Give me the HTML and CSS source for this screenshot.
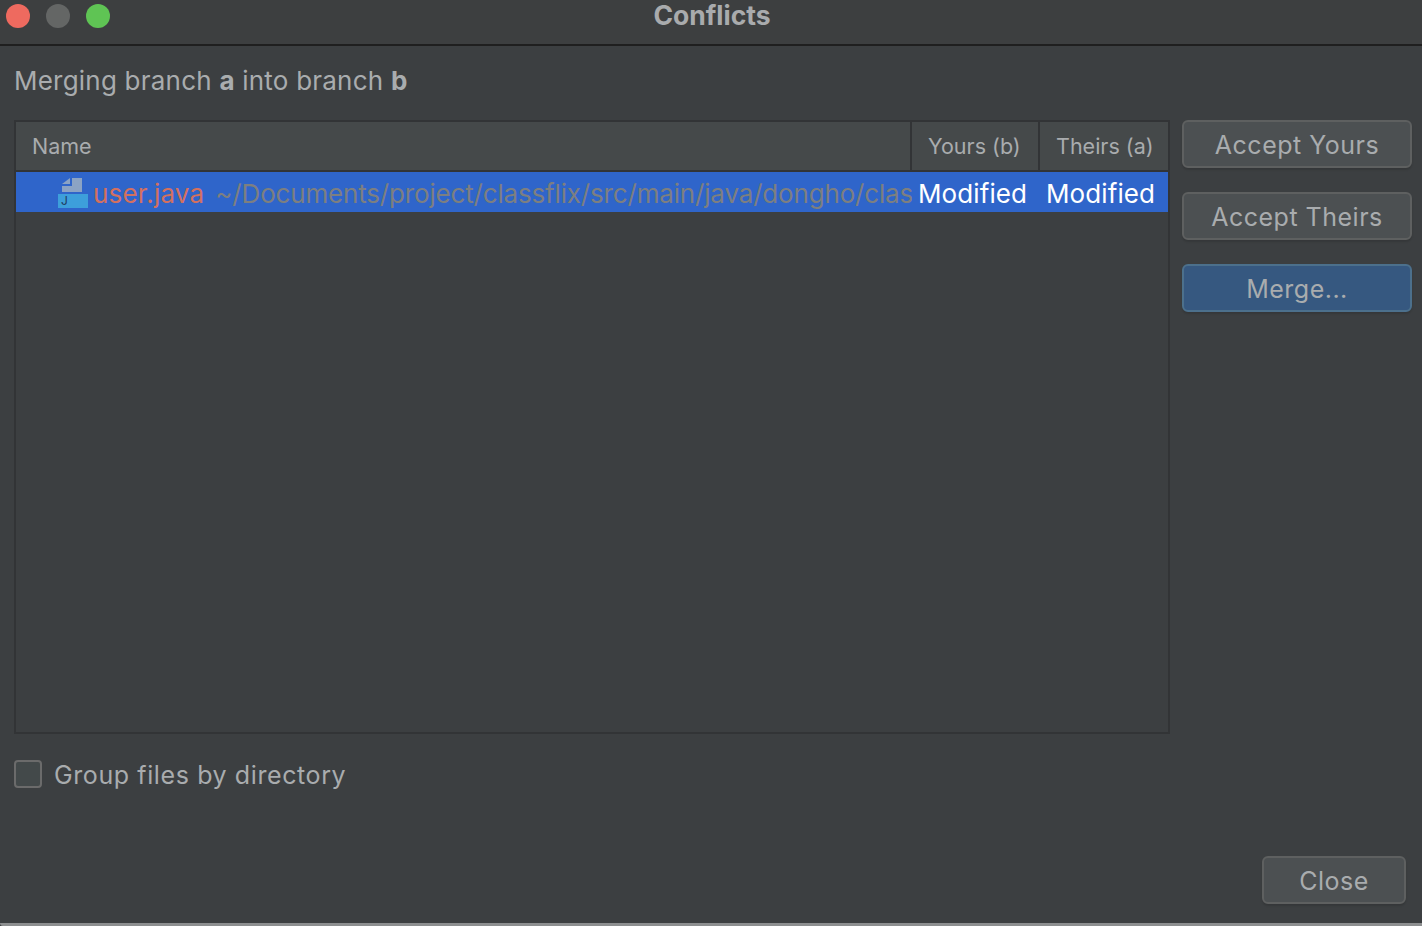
FILE: index.html
```html
<!DOCTYPE html>
<html lang="en">
<head>
  <meta charset="UTF-8" />
  <title>Conflicts</title>
  <link rel="stylesheet" href="styles.css">
</head>
<body>
  <div class="window">
    <div class="titlebar">
      <div class="lights">
        <span class="light red"></span>
        <span class="light gray"></span>
        <span class="light green"></span>
      </div>
      <div class="title">Conflicts</div>
    </div>

    <div class="content">
      <p class="message">Merging branch <b>a</b> into branch <b>b</b></p>

      <div class="main">
        <div class="table">
          <div class="thead">
            <div class="th col-name">Name</div>
            <div class="th col-yours">Yours (b)</div>
            <div class="th col-theirs">Theirs (a)</div>
          </div>
          <div class="row">
            <div class="cell-name">
              <svg class="file-icon" width="30" height="30" viewBox="0 0 30 30">
                <path d="M14 0h10v14H4V8h10z" fill="#8ba3c4"/>
                <path d="M4 6l8-6v6z" fill="#8ba3c4"/>
                <rect x="0" y="16" width="30" height="14" fill="#3d9fdb"/>
                <text x="3" y="27" class="file-letter">J</text>
              </svg>
              <span class="file-name">user.java</span>
              <span class="file-path">~/Documents/project/classflix/src/main/java/dongho/class</span>
            </div>
            <div class="cell col-yours">Modified</div>
            <div class="cell col-theirs">Modified</div>
          </div>
        </div>

        <div class="actions">
          <button class="btn">Accept Yours</button>
          <button class="btn">Accept Theirs</button>
          <button class="btn primary">Merge...</button>
        </div>
      </div>

      <label class="group-files">
        <span class="checkbox"></span>
        <span class="group-label">Group files by directory</span>
      </label>

      <div class="footer">
        <button class="btn close">Close</button>
      </div>
    </div>
    <div class="bottom-edge"></div>
  </div>
</body>
</html>
```

FILE: styles.css
```css
* {
  box-sizing: border-box;
}

html, body {
  margin: 0;
  height: 100%;
  overflow: hidden;
}

body {
  font-family: "Inter", "Liberation Sans", sans-serif;
  font-size: 26px;
  letter-spacing: 0.2px;
  background: #3c3f41;
  color: #a9acae;
}

.window {
  height: 926px;
  display: flex;
  flex-direction: column;
}

.titlebar {
  position: relative;
  height: 46px;
  flex: none;
  background: #3d3f40;
  border-bottom: 2px solid #1f1f1f;
}

.lights {
  display: flex;
  gap: 16px;
  padding: 4px 0 0 6px;
}

.light {
  width: 24px;
  height: 24px;
  border-radius: 50%;
}

.red { background: #ee6a5f; }
.gray { background: #646665; }
.green { background: #5fc454; }

.title {
  position: absolute;
  left: 0;
  right: 0;
  top: -2px;
  padding-left: 2px;
  text-align: center;
  font-size: 26.5px;
  line-height: 34px;
  font-weight: 700;
  letter-spacing: 0;
  color: #a9abad;
}

.content {
  flex: 1;
  display: flex;
  flex-direction: column;
  padding: 0 10px 19px 14px;
}

.message {
  margin: 18px 0 0;
  line-height: 34px;
  height: 57px;
  letter-spacing: 0.22px;
}

.message b {
  font-weight: 700;
}

.main {
  display: flex;
  gap: 12px;
  height: 614px;
  margin-top: -1px;
}

.table {
  width: 1156px;
  flex: none;
  border: 2px solid #323436;
  overflow: hidden;
}

.thead {
  display: flex;
  height: 50px;
  background: #45494a;
  border-bottom: 2px solid #323436;
  font-size: 21.5px;
  letter-spacing: 0;
}

.th {
  display: flex;
  align-items: center;
  padding: 0 0 0 16px;
  border-left: 2px solid #323436;
}

.col-name {
  width: 894px;
  border-left: none;
}

.col-yours {
  width: 128px;
}

.col-theirs {
  width: 130px;
}

.row {
  display: flex;
  height: 40px;
  background: #2f65ca;
  align-items: center;
  line-height: 36px;
}

.cell-name {
  width: 896px;
  flex: none;
  display: flex;
  align-items: center;
  padding-left: 42px;
  white-space: nowrap;
  overflow: hidden;
}

.file-icon {
  flex: none;
  margin: 2px 5px 0 0;
}

.file-letter {
  font-size: 12px;
  fill: #1f3a5c;
}

.file-name {
  flex: none;
  padding-top: 4px;
  color: #d4705f;
  margin-right: 11px;
}

.file-path {
  flex: none;
  padding-top: 4px;
  letter-spacing: -0.17px;
  color: #7d7f80;
}

.cell {
  flex: none;
  width: 128px;
  padding: 4px 0 0 6px;
  letter-spacing: 0.1px;
  color: #fff;
}

.actions {
  width: 230px;
  flex: none;
  display: flex;
  flex-direction: column;
  gap: 24px;
}

.btn {
  height: 48px;
  width: 100%;
  padding: 2px 0 0;
  font: inherit;
  font-size: 25px;
  letter-spacing: 0.5px;
  color: #a9acae;
  background: #4c5052;
  border: 2px solid #5e6060;
  border-radius: 6px;
  box-shadow: 0 2px 2px rgba(0, 0, 0, 0.12);
}

.primary {
  background: #365880;
  border-color: #4c708c;
}

.group-files {
  display: flex;
  align-items: center;
  gap: 12px;
  margin-top: 26px;
  height: 28px;
  font-size: 25px;
  letter-spacing: 0.6px;
}

.group-label {
  padding-top: 2px;
}

.checkbox {
  width: 28px;
  height: 28px;
  background: #43494a;
  border: 2px solid #6b6b6b;
  border-radius: 4px;
}

.footer {
  display: flex;
  justify-content: flex-end;
  margin-top: auto;
  padding-right: 6px;
}

.close {
  width: 144px;
}

.bottom-edge {
  height: 3px;
  flex: none;
  background: #8d8f90;
  border-bottom-left-radius: 6px;
}
```
